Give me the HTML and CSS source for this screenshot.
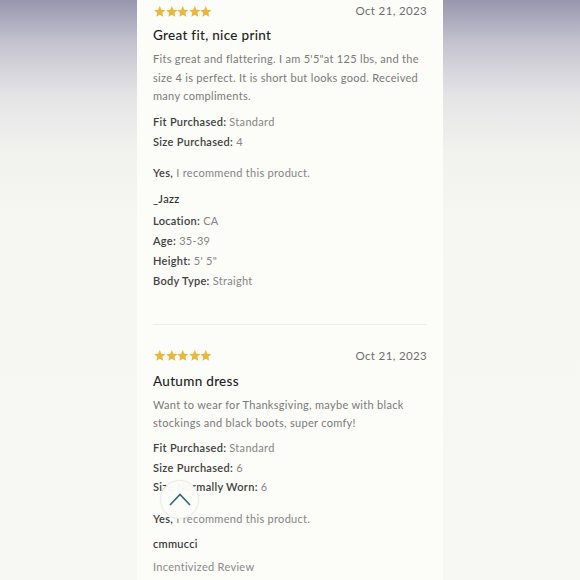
FILE: index.html
```html
<!DOCTYPE html>
<html>
<head>
<meta charset="utf-8">
<link rel="stylesheet" href="styles.css">
</head>
<body>
<svg width="0" height="0" class="defs">
  <defs>
    <symbol id="star" viewBox="0 0 24 24"><path d="M12 0.8l3.3 7.6 8.2.8-6.2 5.4 1.9 8.1L12 18.5l-7.2 4.2 1.9-8.1L0.5 9.2l8.2-.8z"/></symbol>
  </defs>
</svg>
<main class="panel">
  <article class="review first">
    <div class="head">
      <div class="stars">
        <svg><use href="#star"/></svg><svg><use href="#star"/></svg><svg><use href="#star"/></svg><svg><use href="#star"/></svg><svg><use href="#star"/></svg>
      </div>
      <span class="date">Oct 21, 2023</span>
    </div>
    <h2 class="title">Great fit, nice print</h2>
    <p class="body">Fits great and flattering. I am 5'5"at 125 lbs, and the size 4 is perfect. It is short but looks good. Received many compliments.</p>
    <div class="facts">
      <div class="row"><b>Fit Purchased:</b> Standard</div>
      <div class="row"><b>Size Purchased:</b> 4</div>
    </div>
    <div class="row rec"><b>Yes,</b> I recommend this product.</div>
    <div class="row author">_Jazz</div>
    <div class="profile">
      <div class="row"><b>Location:</b> CA</div>
      <div class="row"><b>Age:</b> 35-39</div>
      <div class="row"><b>Height:</b> 5' 5"</div>
      <div class="row"><b>Body Type:</b> Straight</div>
    </div>
  </article>
  <hr class="divider">
  <article class="review second">
    <div class="head">
      <div class="stars">
        <svg><use href="#star"/></svg><svg><use href="#star"/></svg><svg><use href="#star"/></svg><svg><use href="#star"/></svg><svg><use href="#star"/></svg>
      </div>
      <span class="date">Oct 21, 2023</span>
    </div>
    <h2 class="title">Autumn dress</h2>
    <p class="body">Want to wear for Thanksgiving, maybe with black stockings and black boots, super comfy!</p>
    <div class="facts tight">
      <div class="row"><b>Fit Purchased:</b> Standard</div>
      <div class="row"><b>Size Purchased:</b> 6</div>
      <div class="row"><b>Size Normally Worn:</b> 6</div>
    </div>
    <div class="row rec"><b>Yes,</b> I recommend this product.</div>
    <div class="row author">cmmucci</div>
    <div class="row incent">Incentivized Review</div>
  </article>
  <button class="top-btn" aria-label="Back to top">
    <svg viewBox="0 0 24 24"><path d="M2 17L12 6.5 22 17"/></svg>
  </button>
</main>
</body>
</html>
```
FILE: styles.css
```css
html, body { margin: 0; padding: 0; }
body {
  height: 580px;
  overflow: hidden;
  background: linear-gradient(180deg, #9896ae 0px, #c6c5d0 45px, #e4e4e6 95px, #f1f2ee 150px, #f6f7f2 220px, #f7f8f3 580px);
  font-family: Lato, "Open Sans", sans-serif;
}
.defs { position: absolute; }
.panel {
  position: relative;
  width: 306px;
  height: 580px;
  margin: 0 auto;
  background: #fcfcf8;
  box-sizing: border-box;
  padding: 0 16px;
}
.review { display: flex; flex-direction: column; }
.first { padding-top: 4px; }
.second { padding-top: 24px; }
.head { display: flex; justify-content: space-between; align-items: center; height: 14px; }
.stars { display: flex; gap: 0; margin-left: 1px; }
.stars svg { width: 11.6px; height: 13px; fill: #e8b73c; }
.date { font-size: 11.5px; color: #6e6e6e; letter-spacing: 0.35px; line-height: 14px; }
.title {
  margin: 8px 0 0;
  font-size: 13.5px;
  font-weight: 500;
  line-height: 18px;
  color: #1e1e1e;
  letter-spacing: 0.3px;
}
.second .title { margin-top: 9px; }
.body {
  margin: 6px 0 0;
  font-size: 11px;
  line-height: 18.5px;
  color: #7a7a7a;
  letter-spacing: 0.3px;
}
.row {
  font-size: 11px;
  line-height: 20px;
  color: #858585;
  letter-spacing: 0.3px;
}
.row b { font-weight: 600; color: #404040; }
.facts { margin-top: 6px; }
.facts.tight { margin-top: 5.5px; }
.facts.tight .row { line-height: 19.5px; }
.rec { margin-top: 11px; }
.second .rec { margin-top: 12px; }
.author { margin-top: 6px; color: #2e2e2e; font-weight: 500; }
.second .author { margin-top: 5px; }
.profile { margin-top: 2px; }
.incent { margin-top: 3px; color: #8a8a8a; }
.divider {
  margin: 33px 0 0;
  border: 0;
  height: 1px;
  background: #ededea;
}
.top-btn {
  position: absolute;
  left: 23px;
  top: 480px;
  width: 39px;
  height: 39px;
  padding: 0;
  border-radius: 50%;
  border: 1px solid #e9e9e6;
  background: rgba(252, 252, 248, 0.97);
  box-shadow: 0 0 2px rgba(0,0,0,0.05);
  display: flex;
  align-items: center;
  justify-content: center;
}
.top-btn svg {
  width: 24px;
  height: 24px;
  fill: none;
  stroke: #2f6b7a;
  stroke-width: 1.7;
}
```
